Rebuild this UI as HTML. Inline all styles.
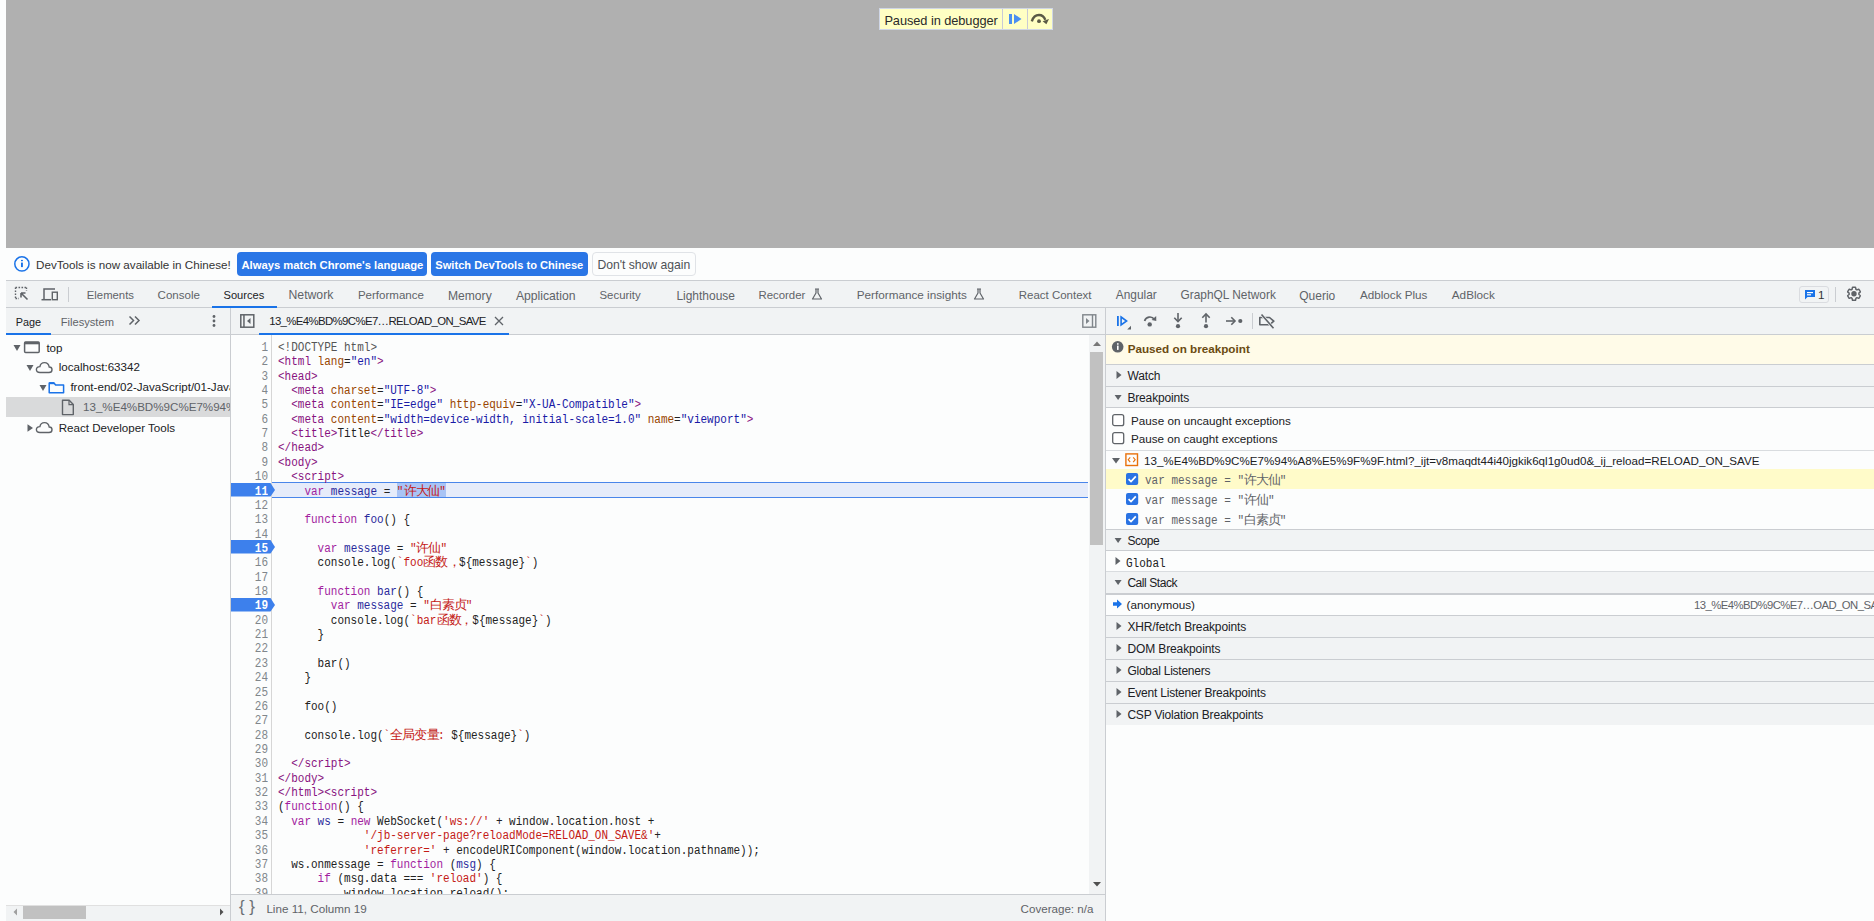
<!DOCTYPE html>
<html><head><meta charset="utf-8"><style>
html,body{margin:0;padding:0;width:1874px;height:921px;overflow:hidden;background:#fcfdfd}
body>div,body>span,body>svg,div>div,div>span,div>svg{position:absolute;display:block}
span{white-space:pre;line-height:1}
b,i{line-height:1}
</style></head><body>
<div style="left:0px;top:0px;width:1874px;height:921px;background:#fcfdfd"></div>
<div style="left:6px;top:0px;width:1868px;height:248px;background:#b0b0b0"></div>
<div style="left:880px;top:9px;width:172px;height:20px;background:#ffffc4;box-shadow:0 0 0 1px #cfd6e6"></div>
<div style="left:1002px;top:9px;width:1px;height:20px;background:#c9cad6"></div>
<div style="left:1027px;top:9px;width:1px;height:20px;background:#c9cad6"></div>
<span style="left:884.40px;top:14.50px;font-size:12.800px;color:#2a2a2a;font-weight:400;font-family:'Liberation Sans',sans-serif;letter-spacing:-0.065px;">Paused in debugger</span>
<svg style="left:1008px;top:13px;" width="15" height="12" viewBox="0 0 15 12"><rect x="1" y="1" width="3" height="10" fill="#4b8ff0"/><path d="M6 1 L13.5 6 L6 11 Z" fill="#4b8ff0"/></svg>
<svg style="left:1030px;top:12px;" width="20" height="14" viewBox="0 0 20 14"><path d="M1.8 9.3 C3.5 4 7 3 9 3 C11.5 3 14 4.3 15.3 7.8" fill="none" stroke="#5a5a46" stroke-width="2.4"/><path d="M12.6 9.2 L19 7 L16.4 12.2 Z" fill="#5a5a46"/><circle cx="9" cy="9.2" r="1.9" fill="#5a5a46"/></svg>
<div style="left:6px;top:248px;width:1868px;height:32px;background:#fcfdfd"></div>
<div style="left:6px;top:280px;width:1868px;height:1px;background:#cacdd1"></div>
<svg style="left:13px;top:256px;" width="18" height="17" viewBox="0 0 18 17"><circle cx="8.9" cy="7.9" r="7.1" fill="none" stroke="#1a73e8" stroke-width="1.5"/><rect x="8" y="3.9" width="1.9" height="1.3" fill="#1a73e8"/><rect x="8" y="6.6" width="1.9" height="4.5" fill="#1a73e8"/></svg>
<span style="left:36.00px;top:258.87px;font-size:11.656px;color:#333;font-weight:400;font-family:'Liberation Sans',sans-serif;">DevTools is now available in Chinese!</span>
<div style="left:237px;top:252px;width:190px;height:24px;background:#2a76e6;border-radius:4px"></div>
<span style="left:241.50px;top:259.58px;font-size:11.244px;color:#fff;font-weight:700;font-family:'Liberation Sans',sans-serif;">Always match Chrome&#x27;s language</span>
<div style="left:431px;top:252px;width:156.5px;height:24px;background:#2a76e6;border-radius:4px"></div>
<span style="left:435.30px;top:259.64px;font-size:11.114px;color:#fff;font-weight:700;font-family:'Liberation Sans',sans-serif;">Switch DevTools to Chinese</span>
<div style="left:592px;top:252px;width:104px;height:24px;background:#fcfdfd;border:1px solid #e0e3e7;border-radius:4px;box-sizing:border-box"></div>
<span style="left:597.40px;top:259.11px;font-size:12.173px;color:#4d5156;font-weight:400;font-family:'Liberation Sans',sans-serif;">Don&#x27;t show again</span>
<div style="left:6px;top:281px;width:1868px;height:26px;background:#f1f3f4"></div>
<div style="left:6px;top:307px;width:1868px;height:1px;background:#cacdd1"></div>
<svg style="left:14px;top:286px;" width="18" height="18" viewBox="0 0 18 18"><path d="M1.5 1.5 H12.5 M1.5 1.5 V12.5 M1.5 12.5 H5 M12.5 1.5 V5" stroke="#5f6368" stroke-width="1.4" stroke-dasharray="1.6 1.4" fill="none"/><path d="M7 7 L13.5 13.5 M7 7 H11.5 M7 7 V11.5" stroke="#5f6368" stroke-width="1.6" fill="none"/></svg>
<svg style="left:40px;top:286px;" width="20" height="18" viewBox="0 0 20 18"><path d="M4 13 V3 H15" stroke="#5f6368" stroke-width="1.5" fill="none"/><rect x="12.3" y="6.2" width="5" height="7.5" stroke="#5f6368" stroke-width="1.4" fill="none"/><path d="M1.5 13.7 H11" stroke="#5f6368" stroke-width="1.5"/></svg>
<div style="left:68px;top:287px;width:1px;height:15px;background:#cacdd1"></div>
<span style="left:86.80px;top:289.94px;font-size:11.323px;color:#5f6368;font-weight:400;font-family:'Liberation Sans',sans-serif;">Elements</span>
<span style="left:157.60px;top:289.82px;font-size:11.557px;color:#5f6368;font-weight:400;font-family:'Liberation Sans',sans-serif;">Console</span>
<span style="left:223.50px;top:290.04px;font-size:11.122px;color:#202124;font-weight:400;font-family:'Liberation Sans',sans-serif;">Sources</span>
<span style="left:288.50px;top:289.48px;font-size:12.243px;color:#5f6368;font-weight:400;font-family:'Liberation Sans',sans-serif;">Network</span>
<span style="left:357.90px;top:289.83px;font-size:11.547px;color:#5f6368;font-weight:400;font-family:'Liberation Sans',sans-serif;">Performance</span>
<span style="left:448.00px;top:289.55px;font-size:12.102px;color:#5f6368;font-weight:400;font-family:'Liberation Sans',sans-serif;">Memory</span>
<span style="left:515.90px;top:289.50px;font-size:12.204px;color:#5f6368;font-weight:400;font-family:'Liberation Sans',sans-serif;">Application</span>
<span style="left:599.50px;top:289.90px;font-size:11.406px;color:#5f6368;font-weight:400;font-family:'Liberation Sans',sans-serif;">Security</span>
<span style="left:676.40px;top:289.61px;font-size:11.977px;color:#5f6368;font-weight:400;font-family:'Liberation Sans',sans-serif;">Lighthouse</span>
<span style="left:758.40px;top:289.89px;font-size:11.429px;color:#5f6368;font-weight:400;font-family:'Liberation Sans',sans-serif;">Recorder</span>
<span style="left:856.70px;top:289.23px;font-size:11.743px;color:#5f6368;font-weight:400;font-family:'Liberation Sans',sans-serif;">Performance insights</span>
<span style="left:1018.80px;top:289.86px;font-size:11.489px;color:#5f6368;font-weight:400;font-family:'Liberation Sans',sans-serif;">React Context</span>
<span style="left:1115.80px;top:289.65px;font-size:11.896px;color:#5f6368;font-weight:400;font-family:'Liberation Sans',sans-serif;">Angular</span>
<span style="left:1180.50px;top:289.65px;font-size:11.906px;color:#5f6368;font-weight:400;font-family:'Liberation Sans',sans-serif;">GraphQL Network</span>
<span style="left:1299.30px;top:289.60px;font-size:11.995px;color:#5f6368;font-weight:400;font-family:'Liberation Sans',sans-serif;">Querio</span>
<span style="left:1360.00px;top:289.26px;font-size:11.677px;color:#5f6368;font-weight:400;font-family:'Liberation Sans',sans-serif;">Adblock Plus</span>
<span style="left:1451.80px;top:289.24px;font-size:11.722px;color:#5f6368;font-weight:400;font-family:'Liberation Sans',sans-serif;">AdBlock</span>
<div style="left:212px;top:306px;width:65px;height:2px;background:#1a73e8"></div>
<svg style="left:811px;top:288px;" width="12" height="12" viewBox="0 0 12 12"><path d="M4 1 H8 M5 1.5 V5 L1.5 11 H10.5 L7 5 V1.5" stroke="#5f6368" stroke-width="1.2" fill="none" stroke-linejoin="round"/></svg>
<svg style="left:972.5px;top:288px;" width="12" height="12" viewBox="0 0 12 12"><path d="M4 1 H8 M5 1.5 V5 L1.5 11 H10.5 L7 5 V1.5" stroke="#5f6368" stroke-width="1.2" fill="none" stroke-linejoin="round"/></svg>
<div style="left:1798.5px;top:286px;width:30px;height:16.5px;border:1px solid #dadce0;border-radius:3px;box-sizing:border-box"></div>
<svg style="left:1804px;top:289px;" width="12" height="11" viewBox="0 0 12 11"><path d="M1 1 H11 V8 H3.5 L1 10.5 Z" fill="#1a73e8"/><rect x="3" y="3" width="6" height="1.2" fill="#fff"/><rect x="3" y="5.2" width="4" height="1.2" fill="#fff"/></svg>
<span style="left:1818.00px;top:289.16px;font-size:11.688px;color:#333;font-weight:400;font-family:'Liberation Sans',sans-serif;">1</span>
<div style="left:1835px;top:287px;width:1px;height:15px;background:#cacdd1"></div>
<svg style="left:1844px;top:284px;" width="20" height="20" viewBox="0 0 20 20"><g transform="translate(10 9.8) scale(0.68) translate(-12 -12)"><path d="M19.14,12.94c0.04-0.3,0.06-0.61,0.06-0.94c0-0.32-0.02-0.64-0.07-0.94l2.03-1.58c0.18-0.14,0.23-0.41,0.12-0.61l-1.92-3.32c-0.12-0.22-0.37-0.29-0.59-0.22l-2.39,0.96c-0.5-0.38-1.03-0.7-1.62-0.94L14.4,2.81c-0.04-0.24-0.24-0.41-0.48-0.41h-3.84c-0.24,0-0.43,0.17-0.47,0.41L9.25,5.35C8.66,5.59,8.12,5.92,7.63,6.29L5.24,5.33c-0.22-0.08-0.47,0-0.59,0.22L2.74,8.87C2.62,9.08,2.66,9.34,2.86,9.48l2.03,1.58C4.84,11.36,4.8,11.69,4.8,12s0.02,0.64,0.07,0.94l-2.03,1.58c-0.18,0.14-0.23,0.41-0.12,0.61l1.92,3.32c0.12,0.22,0.37,0.29,0.59,0.22l2.39-0.96c0.5,0.38,1.03,0.7,1.62,0.94l0.36,2.54c0.05,0.24,0.24,0.41,0.48,0.41h3.84c0.24,0,0.44-0.17,0.47-0.41l0.36-2.54c0.59-0.24,1.13-0.56,1.62-0.94l2.39,0.96c0.22,0.08,0.47,0,0.59-0.22l1.92-3.32c0.12-0.22,0.07-0.47-0.12-0.61L19.14,12.94z" fill="none" stroke="#5f6368" stroke-width="2.1" stroke-linejoin="round"/></g><circle cx="10" cy="9.8" r="2.7" fill="#5f6368"/></svg>
<div style="left:6px;top:308px;width:1868px;height:27px;background:#f1f3f4"></div>
<div style="left:6px;top:334px;width:1868px;height:1px;background:#cacdd1"></div>
<span style="left:15.70px;top:316.58px;font-size:10.833px;color:#202124;font-weight:400;font-family:'Liberation Sans',sans-serif;">Page</span>
<span style="left:60.70px;top:317.42px;font-size:11.155px;color:#5f6368;font-weight:400;font-family:'Liberation Sans',sans-serif;">Filesystem</span>
<svg style="left:128px;top:315px;" width="14" height="12" viewBox="0 0 14 12"><path d="M1.5 1.5 L5.5 5.5 L1.5 9.5 M7 1.5 L11 5.5 L7 9.5" stroke="#5f6368" stroke-width="1.5" fill="none"/></svg>
<svg style="left:211px;top:313px;" width="6" height="16" viewBox="0 0 6 16"><circle cx="3" cy="3.5" r="1.4" fill="#5f6368"/><circle cx="3" cy="8" r="1.4" fill="#5f6368"/><circle cx="3" cy="12.5" r="1.4" fill="#5f6368"/></svg>
<div style="left:6px;top:333px;width:45px;height:2px;background:#1a73e8"></div>
<div style="left:230px;top:308px;width:1px;height:613px;background:#cacdd1"></div>
<svg style="left:240px;top:314px;" width="15" height="14" viewBox="0 0 15 14"><rect x="0.8" y="0.8" width="13" height="12.4" fill="none" stroke="#5f6368" stroke-width="1.5"/><rect x="3.2" y="1" width="1.5" height="12" fill="#5f6368"/><path d="M10.5 4 L7 7 L10.5 10 Z" fill="#5f6368"/></svg>
<span style="left:269.20px;top:315.50px;font-size:11.400px;color:#202124;font-weight:400;font-family:'Liberation Sans',sans-serif;letter-spacing:-0.623px;">13_%E4%BD%9C%E7…RELOAD_ON_SAVE</span>
<svg style="left:494px;top:316px;" width="10" height="10" viewBox="0 0 10 10"><path d="M1 1 L9 9 M9 1 L1 9" stroke="#5f6368" stroke-width="1.3"/></svg>
<div style="left:259px;top:333px;width:250px;height:2px;background:#1a73e8"></div>
<svg style="left:1082px;top:314px;" width="15" height="14" viewBox="0 0 15 14"><rect x="0.8" y="0.8" width="13" height="12.4" fill="none" stroke="#80868b" stroke-width="1.4"/><rect x="9.8" y="1" width="1.4" height="12" fill="#80868b"/><path d="M4 4 L7.5 7 L4 10 Z" fill="#80868b"/></svg>
<div style="left:1105px;top:308px;width:1px;height:613px;background:#cacdd1"></div>
<svg style="left:1115px;top:313px;" width="18" height="18" viewBox="0 0 18 18"><rect x="2" y="3" width="1.8" height="10" fill="#1a73e8"/><path d="M6.1 4 L11.6 8 L6.1 12 Z" fill="none" stroke="#1a73e8" stroke-width="1.6" stroke-linejoin="miter"/><path d="M16 12.8 V16.6 H12.2 Z" fill="#5f6368"/></svg>
<svg style="left:1142px;top:313px;" width="16" height="16" viewBox="0 0 16 16"><path d="M2.6 8 C3.8 3.3 10 2.8 12.2 6.3" fill="none" stroke="#5f6368" stroke-width="1.7"/><path d="M9.6 6.9 L14.3 8 L14.2 3.1 Z" fill="#5f6368"/><circle cx="7.7" cy="11.4" r="2.2" fill="#5f6368"/></svg>
<svg style="left:1172px;top:312px;" width="12" height="17" viewBox="0 0 12 17"><path d="M6 1 V9" stroke="#5f6368" stroke-width="1.6"/><path d="M2.3 5.8 L6 9.5 L9.7 5.8" fill="none" stroke="#5f6368" stroke-width="1.6"/><circle cx="6" cy="14.2" r="2.1" fill="#5f6368"/></svg>
<svg style="left:1200px;top:312px;" width="12" height="17" viewBox="0 0 12 17"><path d="M6 2 V10.5" stroke="#5f6368" stroke-width="1.6"/><path d="M2.3 5.7 L6 2 L9.7 5.7" fill="none" stroke="#5f6368" stroke-width="1.6"/><circle cx="6" cy="14.2" r="2.1" fill="#5f6368"/></svg>
<svg style="left:1225px;top:315px;" width="19" height="12" viewBox="0 0 19 12"><path d="M1 6 H10" stroke="#5f6368" stroke-width="1.6"/><path d="M6.3 2.3 L10 6 L6.3 9.7" fill="none" stroke="#5f6368" stroke-width="1.6"/><circle cx="15.3" cy="6" r="2.1" fill="#5f6368"/></svg>
<div style="left:1251.5px;top:313px;width:1px;height:16px;background:#cacdd1"></div>
<svg style="left:1257px;top:313px;" width="19" height="17" viewBox="0 0 19 17"><path d="M2.8 4.5 H12.5 L16.8 8.2 L12.5 11.8 H2.8 Z" fill="none" stroke="#5f6368" stroke-width="1.6" stroke-linejoin="round"/><path d="M4.5 1.5 L16.5 15.3" stroke="#f1f3f4" stroke-width="3"/><path d="M4.5 1.5 L16.5 15.3" stroke="#5f6368" stroke-width="1.6"/></svg>
<div style="left:6px;top:397px;width:224px;height:20px;background:#d9dadb"></div>
<svg style="left:12px;top:343px;" width="10" height="10" viewBox="0 0 10 10"><path d="M1.5 2 H8.5 L5 8 Z" fill="#5f6368"/></svg>
<svg style="left:23px;top:340px;" width="18" height="14" viewBox="0 0 18 14"><rect x="1.6" y="1.9" width="14.6" height="10.6" rx="1" fill="none" stroke="#5f6368" stroke-width="1.5"/><rect x="1.6" y="1.9" width="14.6" height="2.4" fill="#5f6368"/></svg>
<span style="left:46.40px;top:341.50px;font-size:11.600px;color:#202124;font-weight:400;font-family:'Liberation Sans',sans-serif;">top</span>
<svg style="left:25px;top:363px;" width="10" height="10" viewBox="0 0 10 10"><path d="M1.5 2 H8.5 L5 8 Z" fill="#5f6368"/></svg>
<svg style="left:34.5px;top:360.5px;" width="19" height="13" viewBox="0 0 19 13"><path d="M5 11.5 H14 C16 11.5 17 10.2 17 8.7 C17 7.2 15.8 6 14.2 6 C13.8 3.5 12 1.6 9.5 1.6 C7 1.6 5.3 3.3 4.9 5.6 C2.8 5.7 1.4 7 1.4 8.6 C1.4 10.2 2.8 11.5 5 11.5 Z" fill="none" stroke="#5f6368" stroke-width="1.4"/></svg>
<span style="left:58.70px;top:361.30px;font-size:11.600px;color:#202124;font-weight:400;font-family:'Liberation Sans',sans-serif;">localhost:63342</span>
<svg style="left:37.5px;top:383px;" width="10" height="10" viewBox="0 0 10 10"><path d="M1.5 2 H8.5 L5 8 Z" fill="#5f6368"/></svg>
<svg style="left:47.5px;top:380.5px;" width="17" height="13" viewBox="0 0 17 13"><path d="M1.2 2 V11.8 H15.6 V4 H7.6 L6 2 Z" fill="none" stroke="#1a73e8" stroke-width="1.5" stroke-linejoin="round"/><rect x="1.2" y="1.2" width="5" height="2" fill="#1a73e8"/></svg>
<span style="left:70.40px;top:381.20px;font-size:11.600px;color:#202124;font-weight:400;font-family:'Liberation Sans',sans-serif;">front-end/02-JavaScript/01-JavaScript</span>
<svg style="left:61px;top:398.5px;" width="14" height="17" viewBox="0 0 14 17"><path d="M1.5 1.3 H8.2 L12.3 5.4 V15.6 H1.5 Z" fill="none" stroke="#5f6368" stroke-width="1.4" stroke-linejoin="round"/><path d="M8 1.3 V5.6 H12.3" fill="none" stroke="#5f6368" stroke-width="1.2"/></svg>
<span style="left:83.00px;top:401.10px;font-size:11.600px;color:#5f6368;font-weight:400;font-family:'Liberation Sans',sans-serif;">13_%E4%BD%9C%E7%94%A8%E5%9F%9F.html</span>
<svg style="left:25px;top:423px;" width="10" height="10" viewBox="0 0 10 10"><path d="M2.5 1.2 L8 5 L2.5 8.8 Z" fill="#5f6368"/></svg>
<svg style="left:34.5px;top:420.5px;" width="19" height="13" viewBox="0 0 19 13"><path d="M5 11.5 H14 C16 11.5 17 10.2 17 8.7 C17 7.2 15.8 6 14.2 6 C13.8 3.5 12 1.6 9.5 1.6 C7 1.6 5.3 3.3 4.9 5.6 C2.8 5.7 1.4 7 1.4 8.6 C1.4 10.2 2.8 11.5 5 11.5 Z" fill="none" stroke="#5f6368" stroke-width="1.4"/></svg>
<span style="left:58.70px;top:421.60px;font-size:11.600px;color:#202124;font-weight:400;font-family:'Liberation Sans',sans-serif;">React Developer Tools</span>
<div style="left:230px;top:335px;width:1px;height:586px;background:#cacdd1"></div>
<div style="left:6px;top:905px;width:224px;height:16px;background:#f1f3f4;border-top:1px solid #e0e0e0;box-sizing:border-box"></div>
<div style="left:23px;top:906px;width:63px;height:13px;background:#c1c1c1"></div>
<svg style="left:10px;top:906px;" width="10" height="12" viewBox="0 0 10 12"><path d="M7 2.5 L3.5 6 L7 9.5 Z" fill="#a0a0a0"/></svg>
<svg style="left:217px;top:906px;" width="10" height="12" viewBox="0 0 10 12"><path d="M3 2.5 L6.5 6 L3 9.5 Z" fill="#505050"/></svg>
<div style="left:231px;top:335px;width:874px;height:559px;background:#fcfdfd"></div>
<div style="left:271px;top:335px;width:1px;height:559px;background:#d6d6d6"></div>
<div style="left:272px;top:482px;width:816px;height:16px;background:#e6ecfa;border-top:1px solid #4a86ea;border-bottom:1px solid #4a86ea;box-sizing:border-box"></div>
<div style="left:397.3px;top:483px;width:48.4px;height:14px;background:#a9c4f5"></div>
<div style="left:231px;top:335px;width:858px;height:559px;overflow:hidden">
<span style="left:0;width:37px;text-align:right;top:5.90px;font:12px 'Liberation Mono',monospace;color:#80868b;transform:scaleX(0.916667);transform-origin:37px 0">1</span>
<span style="left:46.8px;top:5.90px;font:12px 'Liberation Mono',monospace;white-space:pre;transform:scaleX(0.916667);transform-origin:0 0"><b style="font-weight:normal;color:#555">&lt;!DOCTYPE html&gt;</b></span>
<span style="left:0;width:37px;text-align:right;top:20.26px;font:12px 'Liberation Mono',monospace;color:#80868b;transform:scaleX(0.916667);transform-origin:37px 0">2</span>
<span style="left:46.8px;top:20.26px;font:12px 'Liberation Mono',monospace;white-space:pre;transform:scaleX(0.916667);transform-origin:0 0"><b style="font-weight:normal;color:#881280">&lt;html</b><b style="font-weight:normal;color:#222"> </b><b style="font-weight:normal;color:#994500">lang</b><b style="font-weight:normal;color:#222">=</b><b style="font-weight:normal;color:#1a1aa6">&quot;en&quot;</b><b style="font-weight:normal;color:#881280">&gt;</b></span>
<span style="left:0;width:37px;text-align:right;top:34.62px;font:12px 'Liberation Mono',monospace;color:#80868b;transform:scaleX(0.916667);transform-origin:37px 0">3</span>
<span style="left:46.8px;top:34.62px;font:12px 'Liberation Mono',monospace;white-space:pre;transform:scaleX(0.916667);transform-origin:0 0"><b style="font-weight:normal;color:#881280">&lt;head&gt;</b></span>
<span style="left:0;width:37px;text-align:right;top:48.98px;font:12px 'Liberation Mono',monospace;color:#80868b;transform:scaleX(0.916667);transform-origin:37px 0">4</span>
<span style="left:46.8px;top:48.98px;font:12px 'Liberation Mono',monospace;white-space:pre;transform:scaleX(0.916667);transform-origin:0 0"><b style="font-weight:normal;color:#222">  </b><b style="font-weight:normal;color:#881280">&lt;meta</b><b style="font-weight:normal;color:#222"> </b><b style="font-weight:normal;color:#994500">charset</b><b style="font-weight:normal;color:#222">=</b><b style="font-weight:normal;color:#1a1aa6">&quot;UTF-8&quot;</b><b style="font-weight:normal;color:#881280">&gt;</b></span>
<span style="left:0;width:37px;text-align:right;top:63.34px;font:12px 'Liberation Mono',monospace;color:#80868b;transform:scaleX(0.916667);transform-origin:37px 0">5</span>
<span style="left:46.8px;top:63.34px;font:12px 'Liberation Mono',monospace;white-space:pre;transform:scaleX(0.916667);transform-origin:0 0"><b style="font-weight:normal;color:#222">  </b><b style="font-weight:normal;color:#881280">&lt;meta</b><b style="font-weight:normal;color:#222"> </b><b style="font-weight:normal;color:#994500">content</b><b style="font-weight:normal;color:#222">=</b><b style="font-weight:normal;color:#1a1aa6">&quot;IE=edge&quot;</b><b style="font-weight:normal;color:#222"> </b><b style="font-weight:normal;color:#994500">http-equiv</b><b style="font-weight:normal;color:#222">=</b><b style="font-weight:normal;color:#1a1aa6">&quot;X-UA-Compatible&quot;</b><b style="font-weight:normal;color:#881280">&gt;</b></span>
<span style="left:0;width:37px;text-align:right;top:77.70px;font:12px 'Liberation Mono',monospace;color:#80868b;transform:scaleX(0.916667);transform-origin:37px 0">6</span>
<span style="left:46.8px;top:77.70px;font:12px 'Liberation Mono',monospace;white-space:pre;transform:scaleX(0.916667);transform-origin:0 0"><b style="font-weight:normal;color:#222">  </b><b style="font-weight:normal;color:#881280">&lt;meta</b><b style="font-weight:normal;color:#222"> </b><b style="font-weight:normal;color:#994500">content</b><b style="font-weight:normal;color:#222">=</b><b style="font-weight:normal;color:#1a1aa6">&quot;width=device-width, initial-scale=1.0&quot;</b><b style="font-weight:normal;color:#222"> </b><b style="font-weight:normal;color:#994500">name</b><b style="font-weight:normal;color:#222">=</b><b style="font-weight:normal;color:#1a1aa6">&quot;viewport&quot;</b><b style="font-weight:normal;color:#881280">&gt;</b></span>
<span style="left:0;width:37px;text-align:right;top:92.06px;font:12px 'Liberation Mono',monospace;color:#80868b;transform:scaleX(0.916667);transform-origin:37px 0">7</span>
<span style="left:46.8px;top:92.06px;font:12px 'Liberation Mono',monospace;white-space:pre;transform:scaleX(0.916667);transform-origin:0 0"><b style="font-weight:normal;color:#222">  </b><b style="font-weight:normal;color:#881280">&lt;title&gt;</b><b style="font-weight:normal;color:#222">Title</b><b style="font-weight:normal;color:#881280">&lt;/title&gt;</b></span>
<span style="left:0;width:37px;text-align:right;top:106.42px;font:12px 'Liberation Mono',monospace;color:#80868b;transform:scaleX(0.916667);transform-origin:37px 0">8</span>
<span style="left:46.8px;top:106.42px;font:12px 'Liberation Mono',monospace;white-space:pre;transform:scaleX(0.916667);transform-origin:0 0"><b style="font-weight:normal;color:#881280">&lt;/head&gt;</b></span>
<span style="left:0;width:37px;text-align:right;top:120.78px;font:12px 'Liberation Mono',monospace;color:#80868b;transform:scaleX(0.916667);transform-origin:37px 0">9</span>
<span style="left:46.8px;top:120.78px;font:12px 'Liberation Mono',monospace;white-space:pre;transform:scaleX(0.916667);transform-origin:0 0"><b style="font-weight:normal;color:#881280">&lt;body&gt;</b></span>
<span style="left:0;width:37px;text-align:right;top:135.14px;font:12px 'Liberation Mono',monospace;color:#80868b;transform:scaleX(0.916667);transform-origin:37px 0">10</span>
<span style="left:46.8px;top:135.14px;font:12px 'Liberation Mono',monospace;white-space:pre;transform:scaleX(0.916667);transform-origin:0 0"><b style="font-weight:normal;color:#222">  </b><b style="font-weight:normal;color:#881280">&lt;script&gt;</b></span>
<svg style="left:0px;top:147.70px" width="45" height="14" viewBox="0 0 45 14"><path d="M0 0 H39.5 L44 6.9 L39.5 13.6 H0 Z" fill="#3d80ec"/></svg>
<span style="left:0;width:37px;text-align:right;top:149.50px;font:bold 12px 'Liberation Mono',monospace;color:#fff;transform:scaleX(0.916667);transform-origin:37px 0">11</span>
<span style="left:46.8px;top:149.50px;font:12px 'Liberation Mono',monospace;white-space:pre;transform:scaleX(0.916667);transform-origin:0 0"><b style="font-weight:normal;color:#222">    </b><b style="font-weight:normal;color:#a21ea0">var</b><b style="font-weight:normal;color:#222"> </b><b style="font-weight:normal;color:#2a2a9c">message</b><b style="font-weight:normal;color:#222"> = </b><b style="font-weight:normal;color:#c41a16">&quot;<i style="display:inline-block;width:13.036358895869492px;font-style:normal;font-family:sans-serif;font-size:12.5px;line-height:0;transform:scaleX(1.0909);transform-origin:0 0">许</i><i style="display:inline-block;width:13.036358895869492px;font-style:normal;font-family:sans-serif;font-size:12.5px;line-height:0;transform:scaleX(1.0909);transform-origin:0 0">大</i><i style="display:inline-block;width:13.036358895869492px;font-style:normal;font-family:sans-serif;font-size:12.5px;line-height:0;transform:scaleX(1.0909);transform-origin:0 0">仙</i>&quot;</b></span>
<span style="left:0;width:37px;text-align:right;top:163.86px;font:12px 'Liberation Mono',monospace;color:#80868b;transform:scaleX(0.916667);transform-origin:37px 0">12</span>
<span style="left:0;width:37px;text-align:right;top:178.22px;font:12px 'Liberation Mono',monospace;color:#80868b;transform:scaleX(0.916667);transform-origin:37px 0">13</span>
<span style="left:46.8px;top:178.22px;font:12px 'Liberation Mono',monospace;white-space:pre;transform:scaleX(0.916667);transform-origin:0 0"><b style="font-weight:normal;color:#222">    </b><b style="font-weight:normal;color:#a21ea0">function</b><b style="font-weight:normal;color:#222"> </b><b style="font-weight:normal;color:#2a2a9c">foo</b><b style="font-weight:normal;color:#222">() {</b></span>
<span style="left:0;width:37px;text-align:right;top:192.58px;font:12px 'Liberation Mono',monospace;color:#80868b;transform:scaleX(0.916667);transform-origin:37px 0">14</span>
<svg style="left:0px;top:205.14px" width="45" height="14" viewBox="0 0 45 14"><path d="M0 0 H39.5 L44 6.9 L39.5 13.6 H0 Z" fill="#3d80ec"/></svg>
<span style="left:0;width:37px;text-align:right;top:206.94px;font:bold 12px 'Liberation Mono',monospace;color:#fff;transform:scaleX(0.916667);transform-origin:37px 0">15</span>
<span style="left:46.8px;top:206.94px;font:12px 'Liberation Mono',monospace;white-space:pre;transform:scaleX(0.916667);transform-origin:0 0"><b style="font-weight:normal;color:#222">      </b><b style="font-weight:normal;color:#a21ea0">var</b><b style="font-weight:normal;color:#222"> </b><b style="font-weight:normal;color:#2a2a9c">message</b><b style="font-weight:normal;color:#222"> = </b><b style="font-weight:normal;color:#c41a16">&quot;<i style="display:inline-block;width:13.036358895869492px;font-style:normal;font-family:sans-serif;font-size:12.5px;line-height:0;transform:scaleX(1.0909);transform-origin:0 0">许</i><i style="display:inline-block;width:13.036358895869492px;font-style:normal;font-family:sans-serif;font-size:12.5px;line-height:0;transform:scaleX(1.0909);transform-origin:0 0">仙</i>&quot;</b></span>
<span style="left:0;width:37px;text-align:right;top:221.30px;font:12px 'Liberation Mono',monospace;color:#80868b;transform:scaleX(0.916667);transform-origin:37px 0">16</span>
<span style="left:46.8px;top:221.30px;font:12px 'Liberation Mono',monospace;white-space:pre;transform:scaleX(0.916667);transform-origin:0 0"><b style="font-weight:normal;color:#222">      console.log(</b><b style="font-weight:normal;color:#c41a16">`foo<i style="display:inline-block;width:13.036358895869492px;font-style:normal;font-family:sans-serif;font-size:12.5px;line-height:0;transform:scaleX(1.0909);transform-origin:0 0">函</i><i style="display:inline-block;width:13.036358895869492px;font-style:normal;font-family:sans-serif;font-size:12.5px;line-height:0;transform:scaleX(1.0909);transform-origin:0 0">数</i><i style="display:inline-block;width:13.036358895869492px;font-style:normal;font-family:sans-serif;font-size:12.5px;line-height:0;transform:scaleX(1.0909);transform-origin:0 0">，</i></b><b style="font-weight:normal;color:#222">${message}</b><b style="font-weight:normal;color:#c41a16">`</b><b style="font-weight:normal;color:#222">)</b></span>
<span style="left:0;width:37px;text-align:right;top:235.66px;font:12px 'Liberation Mono',monospace;color:#80868b;transform:scaleX(0.916667);transform-origin:37px 0">17</span>
<span style="left:0;width:37px;text-align:right;top:250.02px;font:12px 'Liberation Mono',monospace;color:#80868b;transform:scaleX(0.916667);transform-origin:37px 0">18</span>
<span style="left:46.8px;top:250.02px;font:12px 'Liberation Mono',monospace;white-space:pre;transform:scaleX(0.916667);transform-origin:0 0"><b style="font-weight:normal;color:#222">      </b><b style="font-weight:normal;color:#a21ea0">function</b><b style="font-weight:normal;color:#222"> </b><b style="font-weight:normal;color:#2a2a9c">bar</b><b style="font-weight:normal;color:#222">() {</b></span>
<svg style="left:0px;top:262.58px" width="45" height="14" viewBox="0 0 45 14"><path d="M0 0 H39.5 L44 6.9 L39.5 13.6 H0 Z" fill="#3d80ec"/></svg>
<span style="left:0;width:37px;text-align:right;top:264.38px;font:bold 12px 'Liberation Mono',monospace;color:#fff;transform:scaleX(0.916667);transform-origin:37px 0">19</span>
<span style="left:46.8px;top:264.38px;font:12px 'Liberation Mono',monospace;white-space:pre;transform:scaleX(0.916667);transform-origin:0 0"><b style="font-weight:normal;color:#222">        </b><b style="font-weight:normal;color:#a21ea0">var</b><b style="font-weight:normal;color:#222"> </b><b style="font-weight:normal;color:#2a2a9c">message</b><b style="font-weight:normal;color:#222"> = </b><b style="font-weight:normal;color:#c41a16">&quot;<i style="display:inline-block;width:13.036358895869492px;font-style:normal;font-family:sans-serif;font-size:12.5px;line-height:0;transform:scaleX(1.0909);transform-origin:0 0">白</i><i style="display:inline-block;width:13.036358895869492px;font-style:normal;font-family:sans-serif;font-size:12.5px;line-height:0;transform:scaleX(1.0909);transform-origin:0 0">素</i><i style="display:inline-block;width:13.036358895869492px;font-style:normal;font-family:sans-serif;font-size:12.5px;line-height:0;transform:scaleX(1.0909);transform-origin:0 0">贞</i>&quot;</b></span>
<span style="left:0;width:37px;text-align:right;top:278.74px;font:12px 'Liberation Mono',monospace;color:#80868b;transform:scaleX(0.916667);transform-origin:37px 0">20</span>
<span style="left:46.8px;top:278.74px;font:12px 'Liberation Mono',monospace;white-space:pre;transform:scaleX(0.916667);transform-origin:0 0"><b style="font-weight:normal;color:#222">        console.log(</b><b style="font-weight:normal;color:#c41a16">`bar<i style="display:inline-block;width:13.036358895869492px;font-style:normal;font-family:sans-serif;font-size:12.5px;line-height:0;transform:scaleX(1.0909);transform-origin:0 0">函</i><i style="display:inline-block;width:13.036358895869492px;font-style:normal;font-family:sans-serif;font-size:12.5px;line-height:0;transform:scaleX(1.0909);transform-origin:0 0">数</i><i style="display:inline-block;width:13.036358895869492px;font-style:normal;font-family:sans-serif;font-size:12.5px;line-height:0;transform:scaleX(1.0909);transform-origin:0 0">，</i></b><b style="font-weight:normal;color:#222">${message}</b><b style="font-weight:normal;color:#c41a16">`</b><b style="font-weight:normal;color:#222">)</b></span>
<span style="left:0;width:37px;text-align:right;top:293.10px;font:12px 'Liberation Mono',monospace;color:#80868b;transform:scaleX(0.916667);transform-origin:37px 0">21</span>
<span style="left:46.8px;top:293.10px;font:12px 'Liberation Mono',monospace;white-space:pre;transform:scaleX(0.916667);transform-origin:0 0"><b style="font-weight:normal;color:#222">      }</b></span>
<span style="left:0;width:37px;text-align:right;top:307.46px;font:12px 'Liberation Mono',monospace;color:#80868b;transform:scaleX(0.916667);transform-origin:37px 0">22</span>
<span style="left:0;width:37px;text-align:right;top:321.82px;font:12px 'Liberation Mono',monospace;color:#80868b;transform:scaleX(0.916667);transform-origin:37px 0">23</span>
<span style="left:46.8px;top:321.82px;font:12px 'Liberation Mono',monospace;white-space:pre;transform:scaleX(0.916667);transform-origin:0 0"><b style="font-weight:normal;color:#222">      bar()</b></span>
<span style="left:0;width:37px;text-align:right;top:336.18px;font:12px 'Liberation Mono',monospace;color:#80868b;transform:scaleX(0.916667);transform-origin:37px 0">24</span>
<span style="left:46.8px;top:336.18px;font:12px 'Liberation Mono',monospace;white-space:pre;transform:scaleX(0.916667);transform-origin:0 0"><b style="font-weight:normal;color:#222">    }</b></span>
<span style="left:0;width:37px;text-align:right;top:350.54px;font:12px 'Liberation Mono',monospace;color:#80868b;transform:scaleX(0.916667);transform-origin:37px 0">25</span>
<span style="left:0;width:37px;text-align:right;top:364.90px;font:12px 'Liberation Mono',monospace;color:#80868b;transform:scaleX(0.916667);transform-origin:37px 0">26</span>
<span style="left:46.8px;top:364.90px;font:12px 'Liberation Mono',monospace;white-space:pre;transform:scaleX(0.916667);transform-origin:0 0"><b style="font-weight:normal;color:#222">    foo()</b></span>
<span style="left:0;width:37px;text-align:right;top:379.26px;font:12px 'Liberation Mono',monospace;color:#80868b;transform:scaleX(0.916667);transform-origin:37px 0">27</span>
<span style="left:0;width:37px;text-align:right;top:393.62px;font:12px 'Liberation Mono',monospace;color:#80868b;transform:scaleX(0.916667);transform-origin:37px 0">28</span>
<span style="left:46.8px;top:393.62px;font:12px 'Liberation Mono',monospace;white-space:pre;transform:scaleX(0.916667);transform-origin:0 0"><b style="font-weight:normal;color:#222">    console.log(</b><b style="font-weight:normal;color:#c41a16">`<i style="display:inline-block;width:13.036358895869492px;font-style:normal;font-family:sans-serif;font-size:12.5px;line-height:0;transform:scaleX(1.0909);transform-origin:0 0">全</i><i style="display:inline-block;width:13.036358895869492px;font-style:normal;font-family:sans-serif;font-size:12.5px;line-height:0;transform:scaleX(1.0909);transform-origin:0 0">局</i><i style="display:inline-block;width:13.036358895869492px;font-style:normal;font-family:sans-serif;font-size:12.5px;line-height:0;transform:scaleX(1.0909);transform-origin:0 0">变</i><i style="display:inline-block;width:13.036358895869492px;font-style:normal;font-family:sans-serif;font-size:12.5px;line-height:0;transform:scaleX(1.0909);transform-origin:0 0">量</i>: </b><b style="font-weight:normal;color:#222">${message}</b><b style="font-weight:normal;color:#c41a16">`</b><b style="font-weight:normal;color:#222">)</b></span>
<span style="left:0;width:37px;text-align:right;top:407.98px;font:12px 'Liberation Mono',monospace;color:#80868b;transform:scaleX(0.916667);transform-origin:37px 0">29</span>
<span style="left:0;width:37px;text-align:right;top:422.34px;font:12px 'Liberation Mono',monospace;color:#80868b;transform:scaleX(0.916667);transform-origin:37px 0">30</span>
<span style="left:46.8px;top:422.34px;font:12px 'Liberation Mono',monospace;white-space:pre;transform:scaleX(0.916667);transform-origin:0 0"><b style="font-weight:normal;color:#222">  </b><b style="font-weight:normal;color:#881280">&lt;/script&gt;</b></span>
<span style="left:0;width:37px;text-align:right;top:436.70px;font:12px 'Liberation Mono',monospace;color:#80868b;transform:scaleX(0.916667);transform-origin:37px 0">31</span>
<span style="left:46.8px;top:436.70px;font:12px 'Liberation Mono',monospace;white-space:pre;transform:scaleX(0.916667);transform-origin:0 0"><b style="font-weight:normal;color:#881280">&lt;/body&gt;</b></span>
<span style="left:0;width:37px;text-align:right;top:451.06px;font:12px 'Liberation Mono',monospace;color:#80868b;transform:scaleX(0.916667);transform-origin:37px 0">32</span>
<span style="left:46.8px;top:451.06px;font:12px 'Liberation Mono',monospace;white-space:pre;transform:scaleX(0.916667);transform-origin:0 0"><b style="font-weight:normal;color:#881280">&lt;/html&gt;&lt;script&gt;</b></span>
<span style="left:0;width:37px;text-align:right;top:465.42px;font:12px 'Liberation Mono',monospace;color:#80868b;transform:scaleX(0.916667);transform-origin:37px 0">33</span>
<span style="left:46.8px;top:465.42px;font:12px 'Liberation Mono',monospace;white-space:pre;transform:scaleX(0.916667);transform-origin:0 0"><b style="font-weight:normal;color:#222">(</b><b style="font-weight:normal;color:#a21ea0">function</b><b style="font-weight:normal;color:#222">() {</b></span>
<span style="left:0;width:37px;text-align:right;top:479.78px;font:12px 'Liberation Mono',monospace;color:#80868b;transform:scaleX(0.916667);transform-origin:37px 0">34</span>
<span style="left:46.8px;top:479.78px;font:12px 'Liberation Mono',monospace;white-space:pre;transform:scaleX(0.916667);transform-origin:0 0"><b style="font-weight:normal;color:#222">  </b><b style="font-weight:normal;color:#a21ea0">var</b><b style="font-weight:normal;color:#222"> </b><b style="font-weight:normal;color:#2a2a9c">ws</b><b style="font-weight:normal;color:#222"> = </b><b style="font-weight:normal;color:#a21ea0">new</b><b style="font-weight:normal;color:#222"> WebSocket(</b><b style="font-weight:normal;color:#c41a16">&#x27;ws://&#x27;</b><b style="font-weight:normal;color:#222"> + window.location.host +</b></span>
<span style="left:0;width:37px;text-align:right;top:494.14px;font:12px 'Liberation Mono',monospace;color:#80868b;transform:scaleX(0.916667);transform-origin:37px 0">35</span>
<span style="left:46.8px;top:494.14px;font:12px 'Liberation Mono',monospace;white-space:pre;transform:scaleX(0.916667);transform-origin:0 0"><b style="font-weight:normal;color:#222">             </b><b style="font-weight:normal;color:#c41a16">&#x27;/jb-server-page?reloadMode=RELOAD_ON_SAVE&amp;&#x27;</b><b style="font-weight:normal;color:#222">+</b></span>
<span style="left:0;width:37px;text-align:right;top:508.50px;font:12px 'Liberation Mono',monospace;color:#80868b;transform:scaleX(0.916667);transform-origin:37px 0">36</span>
<span style="left:46.8px;top:508.50px;font:12px 'Liberation Mono',monospace;white-space:pre;transform:scaleX(0.916667);transform-origin:0 0"><b style="font-weight:normal;color:#222">             </b><b style="font-weight:normal;color:#c41a16">&#x27;referrer=&#x27;</b><b style="font-weight:normal;color:#222"> + encodeURIComponent(window.location.pathname));</b></span>
<span style="left:0;width:37px;text-align:right;top:522.86px;font:12px 'Liberation Mono',monospace;color:#80868b;transform:scaleX(0.916667);transform-origin:37px 0">37</span>
<span style="left:46.8px;top:522.86px;font:12px 'Liberation Mono',monospace;white-space:pre;transform:scaleX(0.916667);transform-origin:0 0"><b style="font-weight:normal;color:#222">  ws.onmessage = </b><b style="font-weight:normal;color:#a21ea0">function</b><b style="font-weight:normal;color:#222"> (</b><b style="font-weight:normal;color:#2a2a9c">msg</b><b style="font-weight:normal;color:#222">) {</b></span>
<span style="left:0;width:37px;text-align:right;top:537.22px;font:12px 'Liberation Mono',monospace;color:#80868b;transform:scaleX(0.916667);transform-origin:37px 0">38</span>
<span style="left:46.8px;top:537.22px;font:12px 'Liberation Mono',monospace;white-space:pre;transform:scaleX(0.916667);transform-origin:0 0"><b style="font-weight:normal;color:#222">      </b><b style="font-weight:normal;color:#a21ea0">if</b><b style="font-weight:normal;color:#222"> (msg.data === </b><b style="font-weight:normal;color:#c41a16">&#x27;reload&#x27;</b><b style="font-weight:normal;color:#222">) {</b></span>
<span style="left:0;width:37px;text-align:right;top:551.58px;font:12px 'Liberation Mono',monospace;color:#80868b;transform:scaleX(0.916667);transform-origin:37px 0">39</span>
<span style="left:46.8px;top:551.58px;font:12px 'Liberation Mono',monospace;white-space:pre;transform:scaleX(0.916667);transform-origin:0 0"><b style="font-weight:normal;color:#222">          window.location.reload();</b></span>
</div>
<div style="left:1089px;top:335px;width:16px;height:559px;background:#f1f3f4"></div>
<div style="left:1090px;top:352px;width:13px;height:193px;background:#c1c1c1"></div>
<svg style="left:1092px;top:340px;" width="10" height="7" viewBox="0 0 10 7"><path d="M1 6 L5 1.5 L9 6 Z" fill="#777"/></svg>
<svg style="left:1092px;top:881px;" width="10" height="7" viewBox="0 0 10 7"><path d="M1 1 L5 5.5 L9 1 Z" fill="#505050"/></svg>
<div style="left:231px;top:894px;width:874px;height:27px;background:#f1f3f4;border-top:1px solid #cacdd1;box-sizing:border-box"></div>
<span style="left:239.00px;top:898.54px;font-size:16.918px;color:#6b7075;font-weight:400;font-family:'Liberation Sans',sans-serif;">{ }</span>
<span style="left:266.40px;top:902.67px;font-size:11.666px;color:#5f6368;font-weight:400;font-family:'Liberation Sans',sans-serif;">Line 11, Column 19</span>
<span style="left:1020.60px;top:902.70px;font-size:11.606px;color:#5f6368;font-weight:400;font-family:'Liberation Sans',sans-serif;">Coverage: n/a</span>
<div style="left:1106px;top:335px;width:768px;height:586px;background:#fcfdfd"></div>
<div style="left:1106px;top:335px;width:768px;height:29px;background:#fffbe8"></div>
<div style="left:1106px;top:364px;width:768px;height:1px;background:#cacdd1"></div>
<svg style="left:1111px;top:340px;" width="14" height="14" viewBox="0 0 14 14"><circle cx="6.7" cy="6.8" r="5.8" fill="#5f6368"/><rect x="6" y="5.6" width="1.6" height="4.3" fill="#fff"/><rect x="6" y="3.2" width="1.6" height="1.5" fill="#fff"/></svg>
<span style="left:1127.70px;top:343.35px;font-size:11.708px;color:#6b4b12;font-weight:700;font-family:'Liberation Sans',sans-serif;">Paused on breakpoint</span>
<div style="left:1106px;top:365px;width:768px;height:21px;background:#f1f3f4"></div>
<div style="left:1106px;top:386px;width:768px;height:1px;background:#cacdd1"></div>
<svg style="left:1115px;top:370px;" width="9" height="10" viewBox="0 0 9 10"><path d="M1.5 1 L6.5 5 L1.5 9 Z" fill="#5f6368"/></svg>
<span style="left:1127.40px;top:370.00px;font-size:12.000px;color:#202124;font-weight:400;font-family:'Liberation Sans',sans-serif;letter-spacing:-0.113px;">Watch</span>
<div style="left:1106px;top:387px;width:768px;height:20px;background:#f1f3f4"></div>
<div style="left:1106px;top:407px;width:768px;height:1px;background:#cacdd1"></div>
<svg style="left:1114px;top:393px;" width="9" height="9" viewBox="0 0 9 9"><path d="M0.6 2 H7.6 L4.1 7 Z" fill="#5f6368"/></svg>
<span style="left:1127.40px;top:392.00px;font-size:12.000px;color:#202124;font-weight:400;font-family:'Liberation Sans',sans-serif;letter-spacing:-0.151px;">Breakpoints</span>
<svg style="left:1112px;top:414px;" width="13" height="13" viewBox="0 0 13 13"><rect x="0.7" y="0.7" width="11" height="11" rx="2" fill="#fff" stroke="#5f6368" stroke-width="1.3"/></svg>
<span style="left:1131.00px;top:414.65px;font-size:11.699px;color:#202124;font-weight:400;font-family:'Liberation Sans',sans-serif;">Pause on uncaught exceptions</span>
<svg style="left:1112px;top:432px;" width="13" height="13" viewBox="0 0 13 13"><rect x="0.7" y="0.7" width="11" height="11" rx="2" fill="#fff" stroke="#5f6368" stroke-width="1.3"/></svg>
<span style="left:1131.00px;top:432.67px;font-size:11.660px;color:#202124;font-weight:400;font-family:'Liberation Sans',sans-serif;">Pause on caught exceptions</span>
<div style="left:1106px;top:450px;width:768px;height:1px;#e0e0e0;background:#d9dcdf"></div>
<svg style="left:1111px;top:457px;" width="10" height="8" viewBox="0 0 10 8"><path d="M1 1 H9 L5 6.5 Z" fill="#5f6368"/></svg>
<svg style="left:1125px;top:453px;" width="14" height="14" viewBox="0 0 14 14"><rect x="0.9" y="0.9" width="11.6" height="11.6" fill="none" stroke="#e8710a" stroke-width="1.4"/><path d="M5.2 4.3 L3.2 6.7 L5.2 9.1 M8.2 4.3 L10.2 6.7 L8.2 9.1" fill="none" stroke="#e8710a" stroke-width="1.1"/></svg>
<span style="left:1144.00px;top:454.69px;font-size:11.620px;color:#202124;font-weight:400;font-family:'Liberation Sans',sans-serif;">13_%E4%BD%9C%E7%94%A8%E5%9F%9F.html?_ijt=v8maqdt44i40jgkik6ql1g0ud0&amp;_ij_reload=RELOAD_ON_SAVE</span>
<div style="left:1106px;top:469px;width:768px;height:20px;background:#fffbc9"></div>
<svg style="left:1126px;top:473px;" width="13" height="12" viewBox="0 0 13 12"><rect x="0" y="0" width="12.2" height="12" rx="2" fill="#2a73e3"/><path d="M2.6 6.2 L5 8.6 L9.8 3.4" fill="none" stroke="#fff" stroke-width="1.7"/></svg>
<span style="left:1144.5px;top:474.00px;font:12px 'Liberation Mono',monospace;color:#5f6368;white-space:pre;transform:scaleX(0.916667);transform-origin:0 0">var message = "<i style="display:inline-block;width:13.036358895869492px;font-style:normal;font-family:sans-serif;font-size:12.5px;line-height:0;transform:scaleX(1.0909);transform-origin:0 0">许</i><i style="display:inline-block;width:13.036358895869492px;font-style:normal;font-family:sans-serif;font-size:12.5px;line-height:0;transform:scaleX(1.0909);transform-origin:0 0">大</i><i style="display:inline-block;width:13.036358895869492px;font-style:normal;font-family:sans-serif;font-size:12.5px;line-height:0;transform:scaleX(1.0909);transform-origin:0 0">仙</i>"</span>
<svg style="left:1126px;top:493px;" width="13" height="12" viewBox="0 0 13 12"><rect x="0" y="0" width="12.2" height="12" rx="2" fill="#2a73e3"/><path d="M2.6 6.2 L5 8.6 L9.8 3.4" fill="none" stroke="#fff" stroke-width="1.7"/></svg>
<span style="left:1144.5px;top:494.00px;font:12px 'Liberation Mono',monospace;color:#5f6368;white-space:pre;transform:scaleX(0.916667);transform-origin:0 0">var message = "<i style="display:inline-block;width:13.036358895869492px;font-style:normal;font-family:sans-serif;font-size:12.5px;line-height:0;transform:scaleX(1.0909);transform-origin:0 0">许</i><i style="display:inline-block;width:13.036358895869492px;font-style:normal;font-family:sans-serif;font-size:12.5px;line-height:0;transform:scaleX(1.0909);transform-origin:0 0">仙</i>"</span>
<svg style="left:1126px;top:513px;" width="13" height="12" viewBox="0 0 13 12"><rect x="0" y="0" width="12.2" height="12" rx="2" fill="#2a73e3"/><path d="M2.6 6.2 L5 8.6 L9.8 3.4" fill="none" stroke="#fff" stroke-width="1.7"/></svg>
<span style="left:1144.5px;top:514.00px;font:12px 'Liberation Mono',monospace;color:#5f6368;white-space:pre;transform:scaleX(0.916667);transform-origin:0 0">var message = "<i style="display:inline-block;width:13.036358895869492px;font-style:normal;font-family:sans-serif;font-size:12.5px;line-height:0;transform:scaleX(1.0909);transform-origin:0 0">白</i><i style="display:inline-block;width:13.036358895869492px;font-style:normal;font-family:sans-serif;font-size:12.5px;line-height:0;transform:scaleX(1.0909);transform-origin:0 0">素</i><i style="display:inline-block;width:13.036358895869492px;font-style:normal;font-family:sans-serif;font-size:12.5px;line-height:0;transform:scaleX(1.0909);transform-origin:0 0">贞</i>"</span>
<div style="left:1106px;top:529px;width:768px;height:1px;background:#cacdd1"></div>
<div style="left:1106px;top:530px;width:768px;height:20px;background:#f1f3f4"></div>
<div style="left:1106px;top:550px;width:768px;height:1px;background:#cacdd1"></div>
<svg style="left:1114px;top:536px;" width="9" height="9" viewBox="0 0 9 9"><path d="M0.6 2 H7.6 L4.1 7 Z" fill="#5f6368"/></svg>
<span style="left:1127.40px;top:535.00px;font-size:12.000px;color:#202124;font-weight:400;font-family:'Liberation Sans',sans-serif;letter-spacing:-0.445px;">Scope</span>
<div style="left:1106px;top:551px;width:768px;height:20px;background:#fcfdfd"></div>
<div style="left:1106px;top:571px;width:768px;height:1px;#d9dcdf;background:#d9dcdf"></div>
<svg style="left:1113.6px;top:556px;" width="9" height="10" viewBox="0 0 9 10"><path d="M1.5 1 L6.5 5 L1.5 9 Z" fill="#5f6368"/></svg>
<span style="left:1126px;top:556.70px;font:12px 'Liberation Mono',monospace;color:#222;transform:scaleX(0.916667);transform-origin:0 0">Global</span>
<div style="left:1106px;top:572px;width:768px;height:21px;background:#f1f3f4"></div>
<div style="left:1106px;top:593px;width:768px;height:1px;background:#cacdd1"></div>
<svg style="left:1114px;top:578px;" width="9" height="9" viewBox="0 0 9 9"><path d="M0.6 2 H7.6 L4.1 7 Z" fill="#5f6368"/></svg>
<span style="left:1127.40px;top:577.00px;font-size:12.000px;color:#202124;font-weight:400;font-family:'Liberation Sans',sans-serif;letter-spacing:-0.432px;">Call Stack</span>
<div style="left:1106px;top:594px;width:768px;height:1px;background:#cacdd1"></div>
<div style="left:1106px;top:595px;width:768px;height:20px;background:#fcfdfd"></div>
<div style="left:1106px;top:615px;width:768px;height:1px;background:#cacdd1"></div>
<svg style="left:1112px;top:599px;" width="11" height="11" viewBox="0 0 11 11"><path d="M1 3.3 H5 V0.5 L10 5 L5 9.5 V6.7 H1 Z" fill="#1a73e8"/></svg>
<span style="left:1126.60px;top:598.64px;font-size:11.721px;color:#202124;font-weight:400;font-family:'Liberation Sans',sans-serif;">(anonymous)</span>
<span style="left:1694.00px;top:599.85px;font-size:11.300px;color:#5f6368;font-weight:400;font-family:'Liberation Sans',sans-serif;letter-spacing:-0.550px;">13_%E4%BD%9C%E7…OAD_ON_SAVE</span>
<div style="left:1106px;top:616px;width:768px;height:21px;background:#f1f3f4"></div>
<div style="left:1106px;top:637px;width:768px;height:1px;background:#cacdd1"></div>
<svg style="left:1115px;top:621px;" width="9" height="10" viewBox="0 0 9 10"><path d="M1.5 1 L6.5 5 L1.5 9 Z" fill="#5f6368"/></svg>
<span style="left:1127.40px;top:621.00px;font-size:12.000px;color:#202124;font-weight:400;font-family:'Liberation Sans',sans-serif;letter-spacing:-0.128px;">XHR/fetch Breakpoints</span>
<div style="left:1106px;top:638px;width:768px;height:21px;background:#f1f3f4"></div>
<div style="left:1106px;top:659px;width:768px;height:1px;background:#cacdd1"></div>
<svg style="left:1115px;top:643px;" width="9" height="10" viewBox="0 0 9 10"><path d="M1.5 1 L6.5 5 L1.5 9 Z" fill="#5f6368"/></svg>
<span style="left:1127.40px;top:643.00px;font-size:12.000px;color:#202124;font-weight:400;font-family:'Liberation Sans',sans-serif;letter-spacing:-0.113px;">DOM Breakpoints</span>
<div style="left:1106px;top:660px;width:768px;height:21px;background:#f1f3f4"></div>
<div style="left:1106px;top:681px;width:768px;height:1px;background:#cacdd1"></div>
<svg style="left:1115px;top:665px;" width="9" height="10" viewBox="0 0 9 10"><path d="M1.5 1 L6.5 5 L1.5 9 Z" fill="#5f6368"/></svg>
<span style="left:1127.40px;top:665.00px;font-size:12.000px;color:#202124;font-weight:400;font-family:'Liberation Sans',sans-serif;letter-spacing:-0.244px;">Global Listeners</span>
<div style="left:1106px;top:682px;width:768px;height:21px;background:#f1f3f4"></div>
<div style="left:1106px;top:703px;width:768px;height:1px;background:#cacdd1"></div>
<svg style="left:1115px;top:687px;" width="9" height="10" viewBox="0 0 9 10"><path d="M1.5 1 L6.5 5 L1.5 9 Z" fill="#5f6368"/></svg>
<span style="left:1127.40px;top:687.00px;font-size:12.000px;color:#202124;font-weight:400;font-family:'Liberation Sans',sans-serif;letter-spacing:-0.196px;">Event Listener Breakpoints</span>
<div style="left:1106px;top:704px;width:768px;height:21px;background:#f1f3f4"></div>
<div style="left:1106px;top:725px;width:768px;height:1px;background:#cacdd1"></div>
<svg style="left:1115px;top:709px;" width="9" height="10" viewBox="0 0 9 10"><path d="M1.5 1 L6.5 5 L1.5 9 Z" fill="#5f6368"/></svg>
<span style="left:1127.40px;top:709.00px;font-size:12.000px;color:#202124;font-weight:400;font-family:'Liberation Sans',sans-serif;letter-spacing:-0.184px;">CSP Violation Breakpoints</span>
<div style="left:1106px;top:725px;width:768px;height:1px;background:#fcfdfd"></div>
</body></html>
